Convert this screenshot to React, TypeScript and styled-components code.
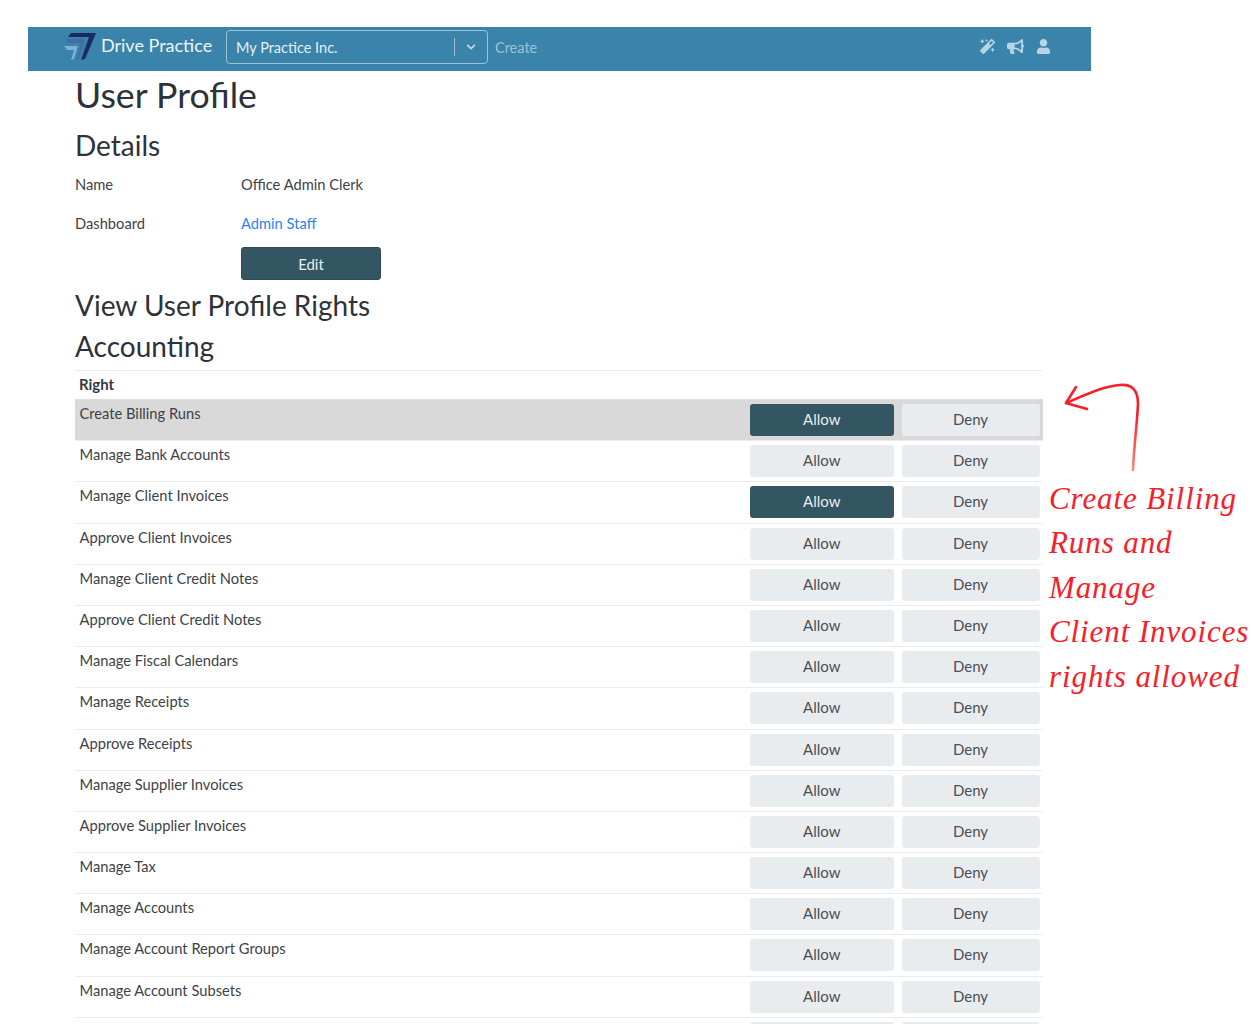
import React from "react";
import styled, { createGlobalStyle } from "styled-components";
import { FaMagic, FaBullhorn, FaUser, FaChevronDown } from "react-icons/fa";

const GlobalStyle = createGlobalStyle`
  html, body {
    margin: 0;
    padding: 0;
    background: #fff;
    overflow: hidden;
  }
  body {
    font-family: "Lato", "Open Sans", sans-serif;
    color: #3d4248;
  }
`;

const Page = styled.div`
  position: relative;
  width: 1252px;
  height: 1024px;
  padding: 27px 0 0 28px;
  box-sizing: border-box;
  overflow: hidden;
`;

const Navbar = styled.header`
  width: 1063px;
  height: 44px;
  background: #3a83aa;
  display: flex;
  align-items: center;
  padding: 0 40px 4px 35px;
  box-sizing: border-box;
`;

const Brand = styled.div`
  display: flex;
  align-items: center;
  width: 163px;
  color: #eef5f9;
  font-size: 18px;
`;

const BrandName = styled.span`
  margin: -5px 0 0 3px;
`;

const PracticeSelect = styled.div`
  width: 262px;
  height: 34px;
  border: 1px solid #9dc3d7;
  border-radius: 4px;
  box-sizing: border-box;
  display: flex;
  align-items: center;
  color: #e4eff5;
  font-size: 14.5px;
  padding-left: 9px;
`;

const SelectValue = styled.span`
  flex: 1;
`;

const SelectDivider = styled.span`
  width: 1px;
  height: 18px;
  background: #9dc3d7;
`;

const SelectArrow = styled.span`
  width: 32px;
  display: flex;
  justify-content: center;
  color: #c4dce8;
  font-size: 10px;
`;

const CreateLink = styled.span`
  margin-left: 7px;
  color: #9cc2d6;
  font-size: 14.5px;
  flex: 1;
`;

const NavIcons = styled.div`
  display: flex;
  align-items: center;
  gap: 12px;
  color: #b6d4e3;
  font-size: 15px;
  margin-top: -2px;
`;

const Content = styled.main`
  width: 968px;
  margin-left: 47px;
`;

const Title = styled.h1`
  margin: 0;
  height: 54px;
  font-size: 35.7px;
  line-height: 47px;
  font-weight: 400;
  color: #2d3238;
`;

const SectionTitle = styled.h2`
  margin: 0;
  height: 41px;
  font-size: 28px;
  line-height: 41px;
  font-weight: 400;
  color: #2d3238;
`;

const DetailList = styled.div`
  margin-top: -2px;
`;

const DetailRow = styled.div`
  display: flex;
  height: 39px;
  align-items: center;
  font-size: 14.7px;
`;

const DetailLabel = styled.span`
  width: 166px;
`;

const AdminLink = styled.a`
  color: #2f80f5;
  text-decoration: none;
`;

const EditButton = styled.button`
  display: block;
  width: 140px;
  height: 33px;
  margin: 5px 0 5px 166px;
  border: 1px solid #2c4a57;
  border-radius: 3px;
  background: #345562;
  color: #e8eef0;
  font: inherit;
  font-size: 15px;
`;

const Table = styled.div`
  border-top: 1px solid #ececec;
  margin-top: 3px;
`;

const HeadRow = styled.div`
  height: 28px;
  padding: 5px 0 0 4px;
  box-sizing: border-box;
  font-size: 15px;
  line-height: 17px;
  font-weight: 700;
  color: #34393f;
`;

const Row = styled.div<{ $highlight?: boolean }>`
  height: 41.2px;
  box-sizing: border-box;
  border-top: 1px solid ${(p) => (p.$highlight ? "#dcdcdc" : "#ececec")};
  background: ${(p) => (p.$highlight ? "#d9d9d9" : "transparent")};
  padding: 4px 3.5px 0 4.5px;
  display: flex;
  align-items: flex-start;
`;

const RightName = styled.span`
  flex: 1;
  font-size: 14.7px;
  line-height: 19px;
`;

const RightButton = styled.button<{ $active?: boolean; $wide?: boolean }>`
  width: ${(p) => (p.$wide ? "144.5px" : "138px")};
  height: 32px;
  margin-left: ${(p) => (p.$wide ? "0" : "7.5px")};
  padding: 0 0 2px;
  border: 0;
  border-radius: 3px;
  background: ${(p) => (p.$active ? "#345562" : "#e9ecef")};
  color: ${(p) => (p.$active ? "#e8eef0" : "#4a4f55")};
  font: inherit;
  font-size: 15px;
`;

const Annotation = styled.div`
  position: absolute;
  left: 1049px;
  top: 477px;
  width: 203px;
  color: #f5202a;
  font-family: "Liberation Serif", serif;
  font-style: italic;
  font-size: 31px;
  letter-spacing: 0.9px;
  line-height: 44.4px;
  white-space: nowrap;
`;

const ArrowMark = styled.svg`
  position: absolute;
  left: 1060px;
  top: 380px;
`;

const rights = [
  "Create Billing Runs",
  "Manage Bank Accounts",
  "Manage Client Invoices",
  "Approve Client Invoices",
  "Manage Client Credit Notes",
  "Approve Client Credit Notes",
  "Manage Fiscal Calendars",
  "Manage Receipts",
  "Approve Receipts",
  "Manage Supplier Invoices",
  "Approve Supplier Invoices",
  "Manage Tax",
  "Manage Accounts",
  "Manage Account Report Groups",
  "Manage Account Subsets",
  "",
];

const Logo = () => (
  <svg width="35" height="30" viewBox="0 0 35 30">
    <path d="M1 14 L15 14 L11 27 L8 28 L11 18 L4 18 Z" fill="#7fb0d6" />
    <path d="M3 7 L22 7 L16 26 L13 28 L18 11 L6 11 Z" fill="#3f6fa8" />
    <path d="M8 1 L33 1 L22 27 L18 28 L26 5 L5 5 Z" fill="#1b2a63" />
  </svg>
);

export default function App() {
  return (
    <Page>
      <GlobalStyle />
      <Navbar>
        <Brand>
          <Logo />
          <BrandName>Drive Practice</BrandName>
        </Brand>
        <PracticeSelect>
          <SelectValue>My Practice Inc.</SelectValue>
          <SelectDivider />
          <SelectArrow>
            <FaChevronDown />
          </SelectArrow>
        </PracticeSelect>
        <CreateLink>Create</CreateLink>
        <NavIcons>
          <FaMagic />
          <FaBullhorn size={17} />
          <FaUser />
        </NavIcons>
      </Navbar>
      <Content>
        <Title>User Profile</Title>
        <SectionTitle>Details</SectionTitle>
        <DetailList>
          <DetailRow>
            <DetailLabel>Name</DetailLabel>
            <span>Office Admin Clerk</span>
          </DetailRow>
          <DetailRow>
            <DetailLabel>Dashboard</DetailLabel>
            <AdminLink href="#">Admin Staff</AdminLink>
          </DetailRow>
        </DetailList>
        <EditButton>Edit</EditButton>
        <SectionTitle>View User Profile Rights</SectionTitle>
        <SectionTitle>Accounting</SectionTitle>
        <Table>
          <HeadRow>Right</HeadRow>
          {rights.map((name, i) => (
            <Row key={i} $highlight={i === 0}>
              <RightName>{name}</RightName>
              <RightButton $wide $active={i === 0 || i === 2}>
                {name && "Allow"}
              </RightButton>
              <RightButton>{name && "Deny"}</RightButton>
            </Row>
          ))}
        </Table>
      </Content>
      <ArrowMark width="84" height="96" viewBox="0 0 84 96" fill="none">
        <defs>
          <linearGradient id="tail" x1="0" y1="0" x2="0" y2="1">
            <stop offset="0.35" stopColor="#f5202a" />
            <stop offset="1" stopColor="#fb8a80" />
          </linearGradient>
        </defs>
        <path
          d="M6 23 C30 13 45 6 60 5 C72 4 78 10 78 24 C77 45 74 65 73 90"
          stroke="url(#tail)"
          strokeWidth="2.6"
          strokeLinecap="round"
        />
        <path d="M16 7 L6 23 L27 29" stroke="#f5202a" strokeWidth="2.6" strokeLinecap="round" strokeLinejoin="round" />
      </ArrowMark>
      <Annotation>
        Create Billing
        <br />
        Runs and
        <br />
        Manage
        <br />
        Client Invoices
        <br />
        rights allowed
      </Annotation>
    </Page>
  );
}
